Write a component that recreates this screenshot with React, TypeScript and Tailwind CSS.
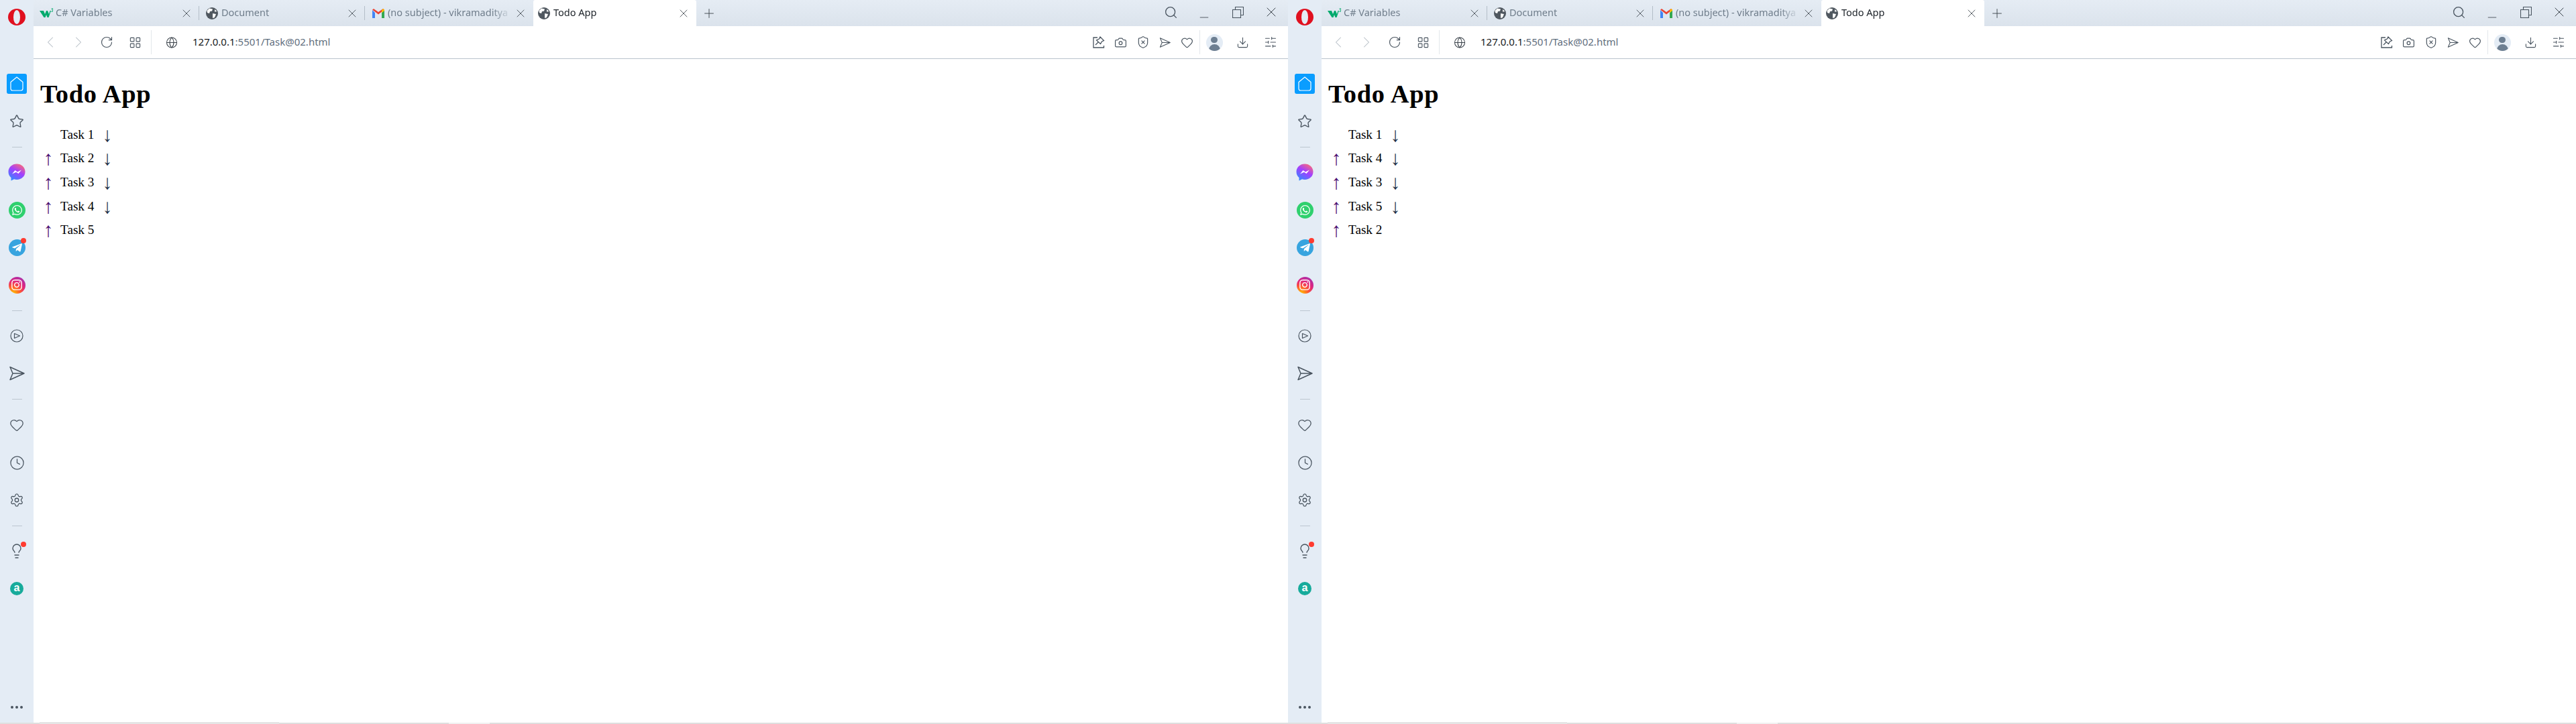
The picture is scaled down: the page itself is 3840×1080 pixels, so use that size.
import React from "react";
import { ChevronLeft, ChevronRight, RotateCw, LayoutGrid, Globe, Search, Camera, ShieldX, Heart, Download, SlidersHorizontal, Clock, Settings, Lightbulb, Star, X, Plus, Minus } from "lucide-react";
import { FaWhatsapp, FaInstagram, FaTelegramPlane } from "react-icons/fa";

const SendIcon = ({ size = 24 }: { size?: number }) => (
  <svg width={size} height={size} viewBox="0 0 24 24" fill="none" stroke="#4a5560" strokeWidth="1.5" strokeLinejoin="round">
    <path d="M2 2.5 L23 12 L2 21.5 L6 12 Z M6 12 H23" />
  </svg>
);

const PinIcon = () => (
  <svg width="18" height="18" viewBox="0 0 18 18" fill="none" stroke="#4a5560" strokeWidth="1.3">
    <path d="M7 2 H1 V17 H16.5 V14" />
    <path d="M11 1 L16.5 6.5 L13.5 8 L11.5 11.5 L5.5 6 L9.5 4 Z M8 9 L4 13" />
  </svg>
);

const OperaLogo = () => (
  <svg width="26" height="25" viewBox="0 0 26 25">
    <ellipse cx="13" cy="12.5" rx="13" ry="12.5" fill="#e0101f" />
    <ellipse cx="13" cy="12.5" rx="5" ry="10.5" fill="#e4ecf5" />
  </svg>
);

const W3Logo = () => (
  <svg width="21" height="15" viewBox="0 0 21 15">
    <path d="M0 4 H6 L8 9 L10 4 H12 L14 9 L15.5 4 H17 L13.5 14 H11.5 L10 10 L8.5 14 H6.5 Z" fill="#04aa6d" />
    <path d="M17.5 1 H20 L18.7 2.8 Q20.5 3.5 19 5.5 L17.5 5" fill="none" stroke="#04aa6d" strokeWidth="1" />
  </svg>
);

const GmailLogo = () => (
  <svg width="18" height="14" viewBox="0 0 18 14">
    <path d="M0 2 V14 H4 V6 Z" fill="#4285f4" />
    <path d="M14 6 V14 H18 V2 Z" fill="#34a853" />
    <path d="M0 1.5 L9 8.5 L18 1.5 L16 0 L9 5 L2 0 Z" fill="#ea4335" />
    <path d="M14 2.5 L16 0 L18 1.5 V3 L14 6 Z" fill="#fbbc04" />
  </svg>
);

const EarthIcon = () => (
  <svg width="18" height="18" viewBox="0 0 18 18">
    <circle cx="9" cy="9" r="9" fill="#505860" />
    <path d="M5 1.5 L10 2.5 L9 5.5 L6 6 L5 9 L2 8 L1.5 5 Z M10 9 L15 10 L13 15 L10 16 Z M13 3 L16.5 6 L13 6.5 Z" fill="#fff" />
  </svg>
);

const HomeIcon = () => (
  <svg width="20" height="22" viewBox="0 0 20 22" fill="none" stroke="#fff" strokeWidth="1.2" strokeLinejoin="round">
    <path d="M10 1 L19 8.5 V18 Q19 21 16 21 H4 Q1 21 1 18 V8.5 Z" />
  </svg>
);

const PlayIcon = () => (
  <svg width="20" height="20" viewBox="0 0 20 20" fill="none" stroke="#4a5560" strokeWidth="1.2" strokeLinejoin="round">
    <circle cx="10" cy="10" r="9" />
    <path d="M6.5 6.5 L14.5 10 L6.5 13.5 Z" />
  </svg>
);

const Messenger = ({ id }: { id: string }) => (
  <svg width="26" height="26" viewBox="0 0 26 26">
    <defs>
      <linearGradient id={id} x1="0.2" y1="1" x2="0.8" y2="0">
        <stop offset="0" stopColor="#2f8bff" />
        <stop offset="0.55" stopColor="#a33fff" />
        <stop offset="1" stopColor="#ff6d72" />
      </linearGradient>
    </defs>
    <path d="M13 0.5 C6 0.5 0.5 5.5 0.5 12.3 C0.5 16 2 19 4.5 21 V25.5 L9 23.3 C10.3 23.7 11.6 23.9 13 23.9 C20 23.9 25.5 18.9 25.5 12.2 C25.5 5.5 20 0.5 13 0.5 Z" fill={`url(#${id})`} />
    <path d="M6 15.5 L10.5 10 L14 12.5 L20 9.5 L15.5 15 L12 12.7 Z" fill="#fff" />
  </svg>
);

const RestoreIcon = () => (
  <svg width="17" height="17" viewBox="0 0 17 17" fill="none" stroke="#4a5560" strokeWidth="1.1">
    <rect x="0.5" y="4.5" width="12" height="12" />
    <path d="M4.5 4.5 V0.5 H16.5 V12.5 H12.5" />
  </svg>
);

const Avatar = () => (
  <div className="w-[25px] h-[25px] rounded-full bg-[#e4ecf5] overflow-hidden flex flex-col items-center">
    <div className="w-[10px] h-[10px] rounded-full bg-[#6d7f92] mt-[4px]" />
    <div className="w-[17px] h-[10px] rounded-t-full bg-[#6d7f92] mt-[2px]" />
  </div>
);

const Divider = () => (
  <div className="h-5 flex items-center justify-center">
    <div className="w-[15px] h-px bg-[#bcc6d0]" />
  </div>
);

const Slot = ({ children }: { children: React.ReactNode }) => (
  <div className="relative h-14 w-full flex items-center justify-center">{children}</div>
);

const RedDot = () => (
  <span className="absolute top-[14px] left-[31px] w-[8px] h-[8px] rounded-full bg-[#ff3b30]" />
);

const Sidebar = ({ id }: { id: string }) => (
  <div className="w-[50px] h-[1078px] shrink-0 flex flex-col bg-[#e4ecf5]">
    <div className="h-[97px] flex justify-center pt-[13px]">
      <OperaLogo />
    </div>
    <Slot>
      <div className="w-[30px] h-[30px] rounded-[3px] bg-[#0a9dff] flex items-center justify-center">
        <HomeIcon />
      </div>
    </Slot>
    <Slot>
      <Star size={22} strokeWidth={1.5} color="#4a5560" />
    </Slot>
    <Divider />
    <Slot>
      <Messenger id={id} />
    </Slot>
    <Slot>
      <div className="w-[25px] h-[25px] rounded-full bg-[#2fd06e] flex items-center justify-center">
        <FaWhatsapp size={17} color="#fff" />
      </div>
    </Slot>
    <Slot>
      <div className="w-[25px] h-[25px] rounded-full bg-[#37a4df] flex items-center justify-center">
        <FaTelegramPlane size={17} color="#fff" />
      </div>
      <RedDot />
    </Slot>
    <Slot>
      <div className="w-[25px] h-[25px] rounded-full bg-[radial-gradient(circle_at_25%_100%,#fdc500_0%,#ff5b30_35%,#e1257c_60%,#8a3ac8_100%)] flex items-center justify-center">
        <FaInstagram size={18} color="#fff" />
      </div>
    </Slot>
    <Divider />
    <Slot>
      <PlayIcon />
    </Slot>
    <Slot>
      <SendIcon />
    </Slot>
    <div className="mb-[1px]">
      <Divider />
    </div>
    <Slot>
      <Heart size={22} strokeWidth={1.4} color="#4a5560" />
    </Slot>
    <Slot>
      <Clock size={23} strokeWidth={1.3} color="#4a5560" />
    </Slot>
    <Slot>
      <Settings size={22} strokeWidth={1.4} color="#4a5560" />
    </Slot>
    <Divider />
    <Slot>
      <Lightbulb size={24} strokeWidth={1.4} color="#4a5560" />
      <RedDot />
    </Slot>
    <Slot>
      <div className="w-[20px] h-[20px] rounded-full bg-[#17ab9b] flex items-center justify-center font-['Liberation_Sans',sans-serif] font-bold text-[16px] leading-none text-white pb-[2px]">
        a
      </div>
    </Slot>
    <div className="mt-auto pb-[21px] flex justify-center gap-[3px]">
      <span className="w-[4px] h-[4px] rounded-full bg-[#4a5560]" />
      <span className="w-[4px] h-[4px] rounded-full bg-[#4a5560]" />
      <span className="w-[4px] h-[4px] rounded-full bg-[#4a5560]" />
    </div>
  </div>
);

const Tab = ({
  title,
  icon,
  iconPad,
  textStart,
  width,
  active,
  separator,
}: {
  title: string;
  icon: React.ReactNode;
  iconPad: string;
  textStart: string;
  width: string;
  active?: boolean;
  separator?: boolean;
}) => (
  <div className={`relative h-[39px] flex items-center ${width} ${active ? "bg-white rounded-t-[3px] text-[#20262c]" : "text-[#6f7d8b]"}`}>
    <div className={`shrink-0 ${iconPad}`}>{icon}</div>
    <div className={`whitespace-nowrap text-[14.5px] w-[184px] pb-[1px] ${textStart} [mask-image:linear-gradient(to_right,black_85%,transparent)]`}>
      {title}
    </div>
    <X size={20} strokeWidth={1} color="#3c444c" className="absolute right-[9px] top-[10px]" />
    {separator && <div className="absolute right-0 top-[9px] w-px h-[21px] bg-[#b4bec8]" />}
  </div>
);

const TabBar = () => (
  <div className="h-[39px] flex bg-gradient-to-b from-[#e5ecf4] to-[#dbe3ec]">
    <Tab title="C# Variables" icon={<W3Logo />} iconPad="pl-[9px]" textStart="ml-[3px]" width="w-[247px]" separator />
    <Tab title="Document" icon={<EarthIcon />} iconPad="pl-[10px]" textStart="ml-[5px]" width="w-[247px]" separator />
    <Tab title="(no subject) - vikramaditya" icon={<GmailLogo />} iconPad="pl-[11px]" textStart="ml-[5px]" width="w-[251px]" />
    <Tab title="Todo App" icon={<EarthIcon />} iconPad="pl-[7px]" textStart="ml-[5px]" width="w-[243px]" active />
    <div className="w-[38px] h-[39px] flex items-center justify-center">
      <Plus size={22} strokeWidth={1} color="#3c444c" />
    </div>
    <div className="ml-auto flex">
      <div className="w-[50px] h-[36px] flex items-center justify-center">
        <Search size={21} strokeWidth={1.5} color="#4a5560" />
      </div>
      <div className="w-[50px] h-[36px] flex items-center justify-center pt-[16px]">
        <Minus size={20} strokeWidth={1} color="#3c444c" />
      </div>
      <div className="w-[50px] h-[36px] flex items-center justify-center">
        <RestoreIcon />
      </div>
      <div className="w-[50px] h-[36px] flex items-center justify-center">
        <X size={24} strokeWidth={1} color="#3c444c" />
      </div>
    </div>
  </div>
);

const NavSlot = ({ children }: { children: React.ReactNode }) => (
  <div className="w-[42px] h-full flex items-center justify-center">{children}</div>
);

const ToolSlot = ({ children }: { children: React.ReactNode }) => (
  <div className="w-[33px] h-full flex items-center justify-center">{children}</div>
);

const Toolbar = () => (
  <div className="h-[49px] flex items-center pl-[4px] pr-[5px] border-b border-[#b9c3cc] bg-white font-['Noto_Sans',sans-serif]">
    <NavSlot>
      <ChevronLeft size={28} strokeWidth={0.9} color="#b6bec6" />
    </NavSlot>
    <NavSlot>
      <ChevronRight size={28} strokeWidth={0.9} color="#b6bec6" />
    </NavSlot>
    <NavSlot>
      <RotateCw size={20} strokeWidth={1.4} color="#4a5560" />
    </NavSlot>
    <NavSlot>
      <LayoutGrid size={19} strokeWidth={1.4} color="#4a5560" />
    </NavSlot>
    <div className="ml-[3px] w-px h-9 bg-[#e3e7eb]" />
    <div className="ml-[21px] w-[18px] flex justify-center">
      <Globe size={19} strokeWidth={1.4} color="#3c444c" />
    </div>
    <div className="ml-[22px] text-[15px] pb-[1px] text-[#5f6e7d] whitespace-nowrap">
      <span className="text-[#16191c]">127.0.0.1</span>:5501/Task@02.html
    </div>
    <div className="ml-auto h-full flex items-center">
      <ToolSlot>
        <PinIcon />
      </ToolSlot>
      <ToolSlot>
        <Camera size={19} strokeWidth={1.5} color="#4a5560" />
      </ToolSlot>
      <ToolSlot>
        <ShieldX size={20} strokeWidth={1.4} color="#4a5560" />
      </ToolSlot>
      <ToolSlot>
        <SendIcon size={17} />
      </ToolSlot>
      <ToolSlot>
        <Heart size={19} strokeWidth={1.5} color="#4a5560" />
      </ToolSlot>
      <div className="ml-[2px] w-px h-9 bg-[#e3e7eb]" />
      <NavSlot>
        <Avatar />
      </NavSlot>
      <NavSlot>
        <Download size={19} strokeWidth={1.4} color="#4a5560" />
      </NavSlot>
      <NavSlot>
        <SlidersHorizontal size={20} strokeWidth={1.3} color="#4a5560" />
      </NavSlot>
    </div>
  </div>
);

const TaskRow = ({ task, first, last }: { task: string; first: boolean; last: boolean }) => (
  <li className="h-[35.6px] flex items-center">
    <span className="w-[24px] text-center text-[30px] leading-none text-[#4b1070]">{first ? "" : "↑"}</span>
    <span className="ml-[6px] w-[60px]">{task}</span>
    <span className="w-[20px] text-center text-[30px] leading-none text-[#1d3146]">{last ? "" : "↓"}</span>
  </li>
);

const TodoPage = ({ tasks }: { tasks: string[] }) => (
  <div className="flex-1 bg-white pl-[10px] pt-[30px] text-black font-['Liberation_Serif',serif]">
    <h1 className="text-[38.4px] leading-[44px] font-bold tracking-[0.7px]">Todo App</h1>
    <ul className="mt-[21px] text-[19.2px] leading-[22px]">
      {tasks.map((task, index) => (
        <TaskRow key={task} task={task} first={index === 0} last={index === tasks.length - 1} />
      ))}
    </ul>
  </div>
);

const BrowserWindow = ({ id, tasks }: { id: string; tasks: string[] }) => (
  <div className="w-[1920px] h-[1080px] shrink-0 flex flex-col bg-white">
    <div className="flex flex-1">
      <Sidebar id={id} />
      <div className="flex-1 flex flex-col">
        <div className="font-['Noto_Sans',sans-serif]">
          <TabBar />
        </div>
        <Toolbar />
        <TodoPage tasks={tasks} />
      </div>
    </div>
    {/* Scrollbar strip along the bottom */}
    <div className="h-[2px] flex bg-[#dfdfdf]">
      <div className="ml-[59px] w-[357px] bg-white border-t border-[#bdbdbd]" />
      <div className="ml-[253px] w-[61px] bg-[#f1f1f1]" />
    </div>
  </div>
);

const App = () => (
  <div className="flex w-[3840px] h-[1080px] overflow-hidden">
    <BrowserWindow id="msg-a" tasks={["Task 1", "Task 2", "Task 3", "Task 4", "Task 5"]} />
    <BrowserWindow id="msg-b" tasks={["Task 1", "Task 4", "Task 3", "Task 5", "Task 2"]} />
  </div>
);

export default App;
